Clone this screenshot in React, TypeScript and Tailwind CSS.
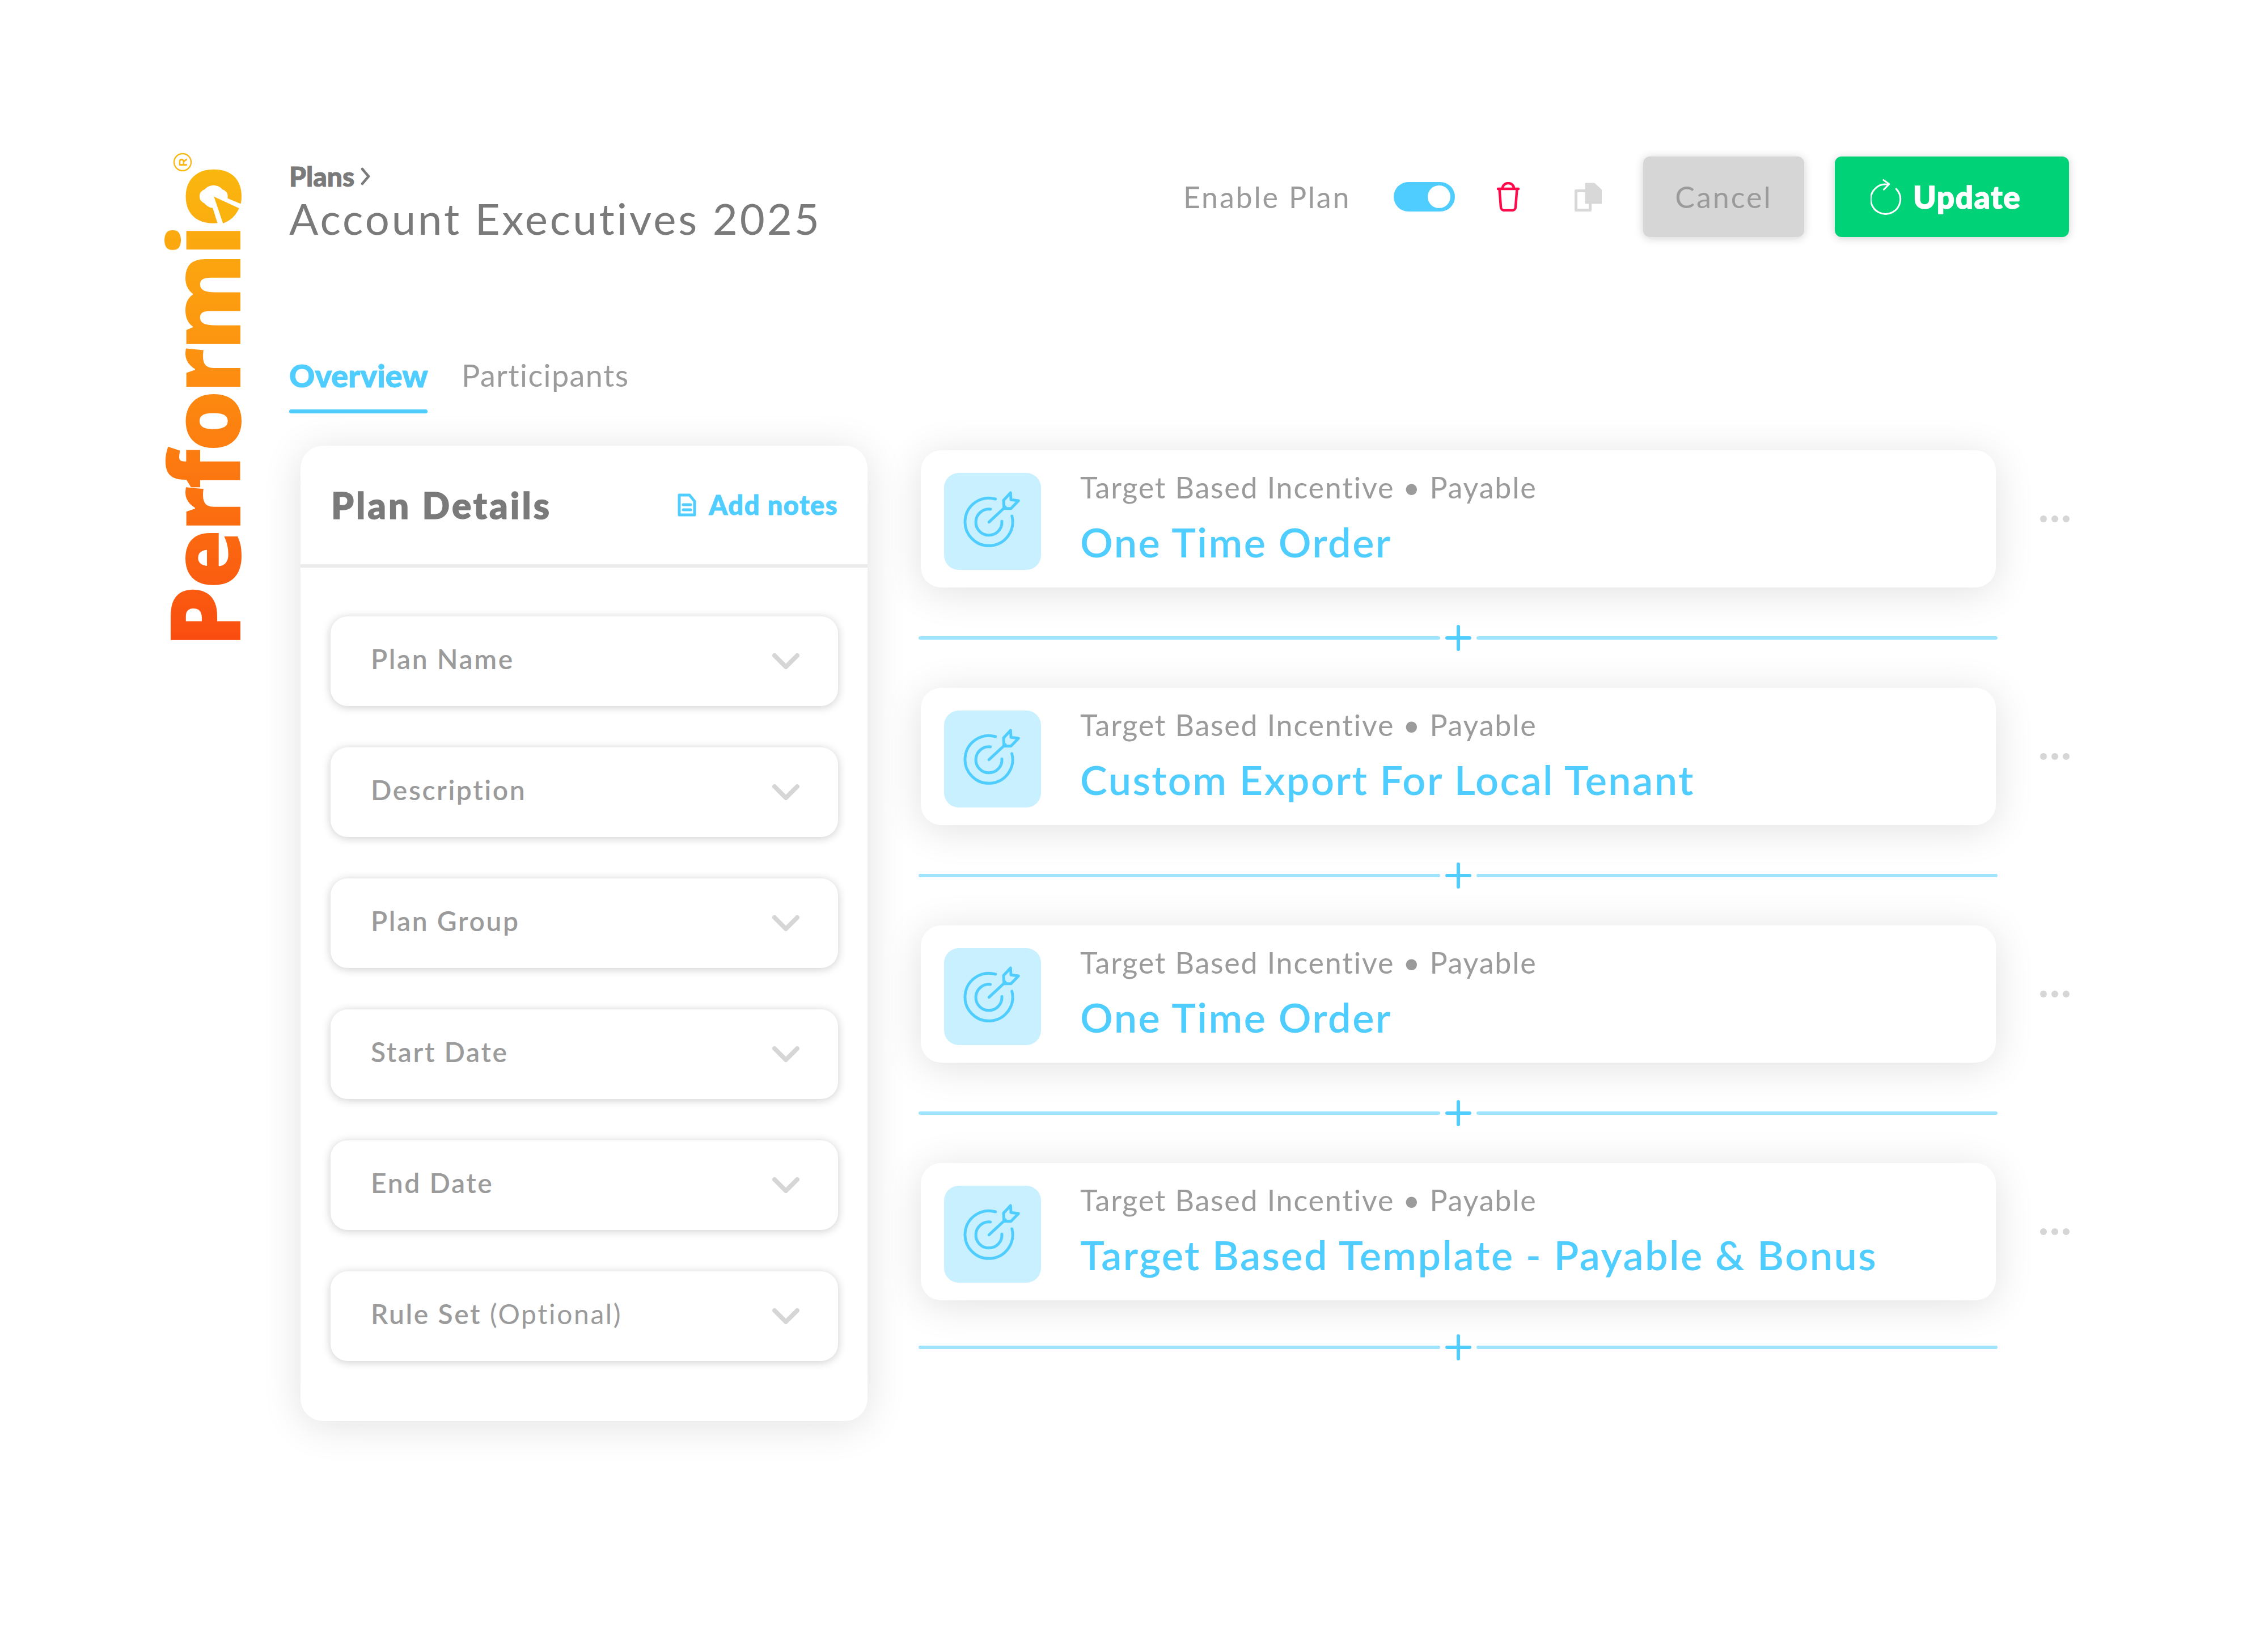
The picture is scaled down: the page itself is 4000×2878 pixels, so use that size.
import React from "react";

const FONT = "font-['Lato','Open_Sans',sans-serif]";

function TargetIcon() {
  return (
    <svg viewBox="0 0 171 171" className="w-[171px] h-[171px]" fill="none" stroke="#50cdff" strokeWidth="5" strokeLinecap="round" strokeLinejoin="round">
      <path d="M90.7 46A42 42 0 1 0 119.7 76" />
      <path d="M81.7 64A23 23 0 1 0 102 85.3" />
      <path d="M79.3 86.7L108 60" />
      <path d="M105 48.3L117.3 35L118 47.3L131.3 49L118 62.7H105.7Z" />
    </svg>
  );
}

function Chevron() {
  return (
    <svg viewBox="0 0 48 28" className="w-[48px] h-[28px]" fill="none" stroke="#d6d6d6" strokeWidth="8" strokeLinecap="round" strokeLinejoin="round">
      <path d="M4 4L24 24L44 4" />
    </svg>
  );
}

function Field({ label, extra }: { label: string; extra?: string }) {
  return (
    <div className="h-[158px] rounded-[30px] bg-white shadow-[0_2px_16px_rgba(0,0,0,0.2)] flex items-center justify-between pl-[71px] pr-[68px]">
      <span className="pb-[8px] text-[48px] font-semibold tracking-[2.6px] text-[#9b9b9b]">
        {label}
        {extra ? <span className="font-normal"> {extra}</span> : null}
      </span>
      <Chevron />
    </div>
  );
}

function Card({ title }: { title: string }) {
  return (
    <div className="flex items-center">
      <div className="w-[1896px] h-[242px] rounded-[36px] bg-white shadow-[0_8px_70px_rgba(0,0,0,0.12)] flex items-center pl-[41px]">
        <div className="mt-[9px] w-[171px] h-[171px] rounded-[26px] bg-[#c9f0ff] flex items-center justify-center">
          <TargetIcon />
        </div>
        <div className="ml-[69px] pb-[5px] flex flex-col">
          <span className="text-[52px] leading-[64px] font-normal tracking-[1.8px] text-[#9b9b9b]">Target Based Incentive • Payable</span>
          <span className="mt-[20px] text-[72px] leading-[88px] font-semibold tracking-[2.4px] text-[#50cdff]">{title}</span>
        </div>
      </div>
      <div className="ml-[78px] flex gap-[8px]">
        <span className="w-[12px] h-[12px] rounded-full bg-[#d6d6d6]" />
        <span className="w-[12px] h-[12px] rounded-full bg-[#d6d6d6]" />
        <span className="w-[12px] h-[12px] rounded-full bg-[#d6d6d6]" />
      </div>
    </div>
  );
}

function Divider() {
  return (
    <div className="w-[1903px] -ml-[4px] flex items-center gap-[9px]">
      <div className="flex-1 h-[6px] rounded-full bg-[#a0e5ff]" />
      <svg viewBox="0 0 46 46" className="w-[46px] h-[46px]" fill="none" stroke="#50cdff" strokeWidth="6" strokeLinecap="round">
        <path d="M23 3V43M3 23H43" />
      </svg>
      <div className="flex-1 h-[6px] rounded-full bg-[#a0e5ff]" />
    </div>
  );
}

function Logo() {
  return (
    <div className="relative w-[140px] h-[880px] pt-[47px]">
      <span className="block -ml-[11px] [writing-mode:vertical-rl] rotate-180 text-[172px] leading-[140px] font-extrabold font-['Open_Sans',sans-serif] tracking-[-5.5px] bg-gradient-to-t from-[#fab70f] to-[#f94a10] bg-clip-text text-transparent">
        Performio
      </span>
      <svg viewBox="0 0 510 510" className="absolute -left-[18px] top-0 w-[170px] h-[170px]">
        <circle cx="290" cy="290" r="60" fill="#ffffff" />
        <path d="M290 283L350 293L450 335L430 400L345 452L315 445L286 352Z" fill="#ffffff" />
        <path d="M292 290L425 352A148 148 0 0 1 340 432Z" fill="#fab30f" />
        <circle cx="126" cy="108" r="45" fill="#ffffff" stroke="#fab70f" strokeWidth="7" />
        <text x="126" y="108" transform="rotate(-90 126 108)" textAnchor="middle" dominantBaseline="central" fontSize="62" fontWeight="700" fontFamily="Liberation Sans, sans-serif" fill="#fab70f">R</text>
      </svg>
    </div>
  );
}

export default function App() {
  return (
    <div className={`w-[4000px] h-[2878px] bg-white ${FONT} flex pl-[298px] pt-[250px]`}>
      <div className="w-[212px] shrink-0 flex flex-col">
        <Logo />
      </div>
      <div className="w-[3200px] flex flex-col">
        <div className="flex justify-between items-start pt-[26px] pr-[61px]">
          <div className="flex flex-col pt-[7px]">
            <div className="flex items-center gap-[10px] text-[48px] leading-[56px] font-black [-webkit-text-stroke:1px_#7a7a7a] text-[#7a7a7a]">
              Plans
              <svg viewBox="0 0 18 32" className="w-[18px] h-[32px]" fill="none" stroke="#7a7a7a" strokeWidth="4.5" strokeLinecap="round" strokeLinejoin="round">
                <path d="M4 3L15 16L4 29" />
              </svg>
            </div>
            <div className="text-[76px] leading-[92px] font-normal tracking-[4px] text-[#7a7a7a]">Account Executives 2025</div>
          </div>
          <div className="flex items-center w-[1562px]">
            <span className="w-[371px] text-[52px] font-normal tracking-[2.8px] text-[#9b9b9b]">Enable Plan</span>
            <div className="w-[108px] h-[52px] rounded-full bg-[#50cdff] flex items-center justify-end pr-[8px]">
              <span className="w-[40px] h-[40px] rounded-full bg-white" />
            </div>
            <svg viewBox="0 0 40 52" className="ml-[74px] w-[40px] h-[52px]" fill="none" stroke="#ff0a4b" strokeWidth="4.5" strokeLinecap="round" strokeLinejoin="round">
              <path d="M2 12H38M10 11A10 9 0 0 1 30 11M4.5 12L7 44A6 6 0 0 0 13 50H27A6 6 0 0 0 33 44L35.5 12" />
            </svg>
            <svg viewBox="0 0 48 52" className="ml-[97px] w-[48px] h-[52px]" fill="none">
              <path d="M2.5 15.5H27.5V49.5H2.5Z" stroke="#d8d8d8" strokeWidth="5" strokeLinejoin="round" />
              <path d="M19 2H35L48 14V38H19Z" fill="#d8d8d8" stroke="#d8d8d8" strokeWidth="1" strokeLinejoin="round" />
            </svg>
            <button className="ml-[73px] w-[284px] h-[142px] rounded-[12px] bg-[#d6d6d6] shadow-[0_2px_16px_rgba(0,0,0,0.18)] text-[52px] font-normal tracking-[3px] text-[#9b9b9b]">Cancel</button>
            <button className="ml-[54px] w-[413px] h-[142px] rounded-[12px] bg-[#00d377] shadow-[0_2px_16px_rgba(0,0,0,0.18)] flex items-center pl-[63px] gap-[18px] text-[55px] font-black tracking-[1.6px] [-webkit-text-stroke:1.5px_#ffffff] text-white">
              <svg viewBox="60 40 170 200" className="w-[57px] h-[67px]" fill="none" stroke="#ffffff" strokeWidth="9" strokeLinecap="round" strokeLinejoin="round">
                <path d="M195 97A78 78 0 1 1 150 74" />
                <path d="M128 50L158 72L130 100" />
              </svg>
              Update
            </button>
          </div>
        </div>
        <div className="mt-[199px] flex gap-[60px]">
          <div className="flex flex-col w-[244px] items-stretch">
            <span className="text-[56px] leading-[64px] font-black [-webkit-text-stroke:1px_#50cdff] text-[#50cdff]">Overview</span>
            <div className="mt-[28px] h-[7px] rounded-full bg-[#50cdff]" />
          </div>
          <span className="text-[54px] leading-[64px] font-normal tracking-[1.4px] text-[#9b9b9b]">Participants</span>
        </div>
        <div className="mt-[57px] flex ml-[20px]">
          <div className="w-[1000px] h-[1720px] shrink-0 rounded-[40px] bg-white shadow-[0_8px_70px_rgba(0,0,0,0.12)] flex flex-col">
            <div className="h-[215px] border-b-[6px] border-[#ebebeb] flex items-center justify-between pl-[54px] pr-[52px]">
              <span className="text-[64px] font-black tracking-[4px] [-webkit-text-stroke:1.5px_#7a7a7a] text-[#7a7a7a]">Plan Details</span>
              <span className="flex items-center gap-[22px] text-[47px] font-black tracking-[1.5px] [-webkit-text-stroke:1px_#50cdff] text-[#50cdff]">
                <svg viewBox="0 0 33 41" className="w-[33px] h-[41px]" fill="none" stroke="#50cdff" strokeWidth="5" strokeLinejoin="round" strokeLinecap="round">
                  <path d="M3 3H21L30 14V38H3Z" />
                  <path d="M10 20H23M10 29H23" strokeWidth="5" />
                </svg>
                Add notes
              </span>
            </div>
            <div className="mt-[86px] flex flex-col gap-[73px] pl-[53px] pr-[52px]">
              <Field label="Plan Name" />
              <Field label="Description" />
              <Field label="Plan Group" />
              <Field label="Start Date" />
              <Field label="End Date" />
              <Field label="Rule Set" extra="(Optional)" />
            </div>
          </div>
          <div className="ml-[94px] mt-[8px] flex flex-col">
            <Card title="One Time Order" />
            <div className="mt-[66px] mb-[65px]"><Divider /></div>
            <Card title="Custom Export For Local Tenant" />
            <div className="mt-[66px] mb-[65px]"><Divider /></div>
            <Card title="One Time Order" />
            <div className="mt-[66px] mb-[65px]"><Divider /></div>
            <Card title="Target Based Template - Payable & Bonus" />
            <div className="mt-[60px]"><Divider /></div>
          </div>
        </div>
      </div>
    </div>
  );
}
